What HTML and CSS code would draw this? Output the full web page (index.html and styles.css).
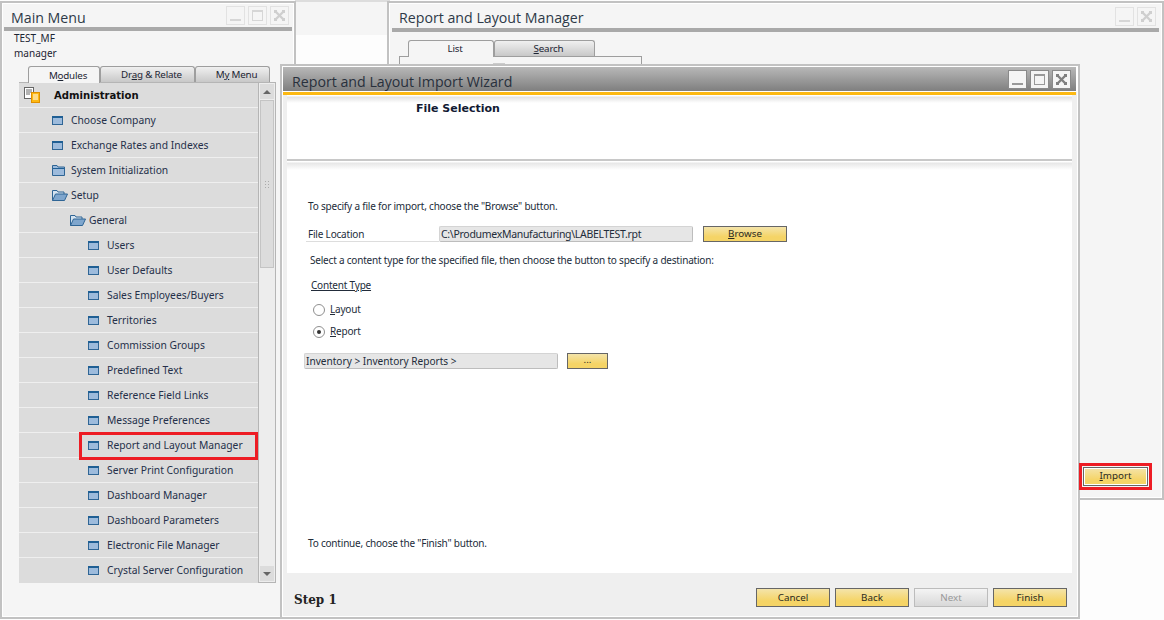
FILE: index.html
```html
<!DOCTYPE html>
<html lang="en">
<head>
<meta charset="utf-8">
<title>Report and Layout Import Wizard</title>
<link rel="stylesheet" href="styles.css">
</head>
<body>
<svg width="0" height="0" class="defs">
  <symbol id="form" viewBox="0 0 11 9"><rect x=".5" y=".5" width="10" height="8" fill="#9dbbdc" stroke="#2f6595"/><rect x="0" y="0" width="11" height="2" fill="#1f5f94"/></symbol>
  <symbol id="folder" viewBox="0 0 13 11"><path d="M.5 10.500V.5h4.500l1 1.500h6.500v8.500z" fill="#9dbbdc" stroke="#2f6595"/><rect x="1" y="3" width="11" height="1" fill="#1f5f94"/></symbol>
  <symbol id="open" viewBox="0 0 16 11"><path d="M.5 10.500V.5h4.500l1 1.500h6v2" fill="#d5e3f0" stroke="#2f6595"/><path d="M.5 10.500l3-6.500h12l-3 6.500z" fill="#7fa6cd" stroke="#2f6595"/></symbol>
  <symbol id="x" viewBox="0 0 11 11"><path d="M2 2l7 7M9 2l-7 7" stroke="currentColor" stroke-width="2.400" fill="none"/><path d="M0 0h3v2H2v1H0zM8 0h3v3H9V2H8zM0 8h2v1h1v2H0zM9 8h2v3H8V9h1z" fill="currentColor"/></symbol>
</svg>

<div class="backdrop"></div>

<section class="win main-win">
  <header class="win-title"><h1>Main Menu</h1>
    <div class="controls faint">
      <span class="ctl"><i class="min"></i></span><span class="ctl"><i class="max"></i></span><span class="ctl"><svg class="xicon"><use href="#x"/></svg></span>
    </div>
  </header>
  <div class="user">TEST_MF</div>
  <div class="user">manager</div>
  <div class="tabs menu-tabs">
    <span class="tab active mod"><span>M<u>o</u>dules</span></span>
    <span class="tab drag"><span>Dr<u>a</u>g &amp; Relate</span></span>
    <span class="tab mymenu"><span>M<u>y</u> Menu</span></span>
  </div>
  <div class="menu-panel">
    <ul class="menu-list">
      <li class="row head"><svg class="admin" width="16" height="16" viewBox="0 0 16 16"><rect x=".5" y=".5" width="9" height="11" fill="#fff" stroke="#666"/><path d="M2 3h6M2 5h6M2 7h4" stroke="#666"/><rect x="7.500" y="5.500" width="8" height="10" fill="#fdb913" stroke="#e09000"/><path d="M9 8h5M9 10h5M9 12h5" stroke="#fff"/></svg><b>Administration</b></li>
      <li class="row l1"><svg class="ic"><use href="#form"/></svg>Choose Company</li>
      <li class="row l1"><svg class="ic"><use href="#form"/></svg>Exchange Rates and Indexes</li>
      <li class="row l1"><svg class="ic fold"><use href="#folder"/></svg>System Initialization</li>
      <li class="row l1"><svg class="ic wide"><use href="#open"/></svg>Setup</li>
      <li class="row l2"><svg class="ic wide"><use href="#open"/></svg>General</li>
      <li class="row l3"><svg class="ic"><use href="#form"/></svg>Users</li>
      <li class="row l3"><svg class="ic"><use href="#form"/></svg>User Defaults</li>
      <li class="row l3"><svg class="ic"><use href="#form"/></svg>Sales Employees/Buyers</li>
      <li class="row l3"><svg class="ic"><use href="#form"/></svg>Territories</li>
      <li class="row l3"><svg class="ic"><use href="#form"/></svg>Commission Groups</li>
      <li class="row l3"><svg class="ic"><use href="#form"/></svg>Predefined Text</li>
      <li class="row l3"><svg class="ic"><use href="#form"/></svg>Reference Field Links</li>
      <li class="row l3"><svg class="ic"><use href="#form"/></svg>Message Preferences</li>
      <li class="row l3"><svg class="ic"><use href="#form"/></svg>Report and Layout Manager</li>
      <li class="row l3"><svg class="ic"><use href="#form"/></svg>Server Print Configuration</li>
      <li class="row l3"><svg class="ic"><use href="#form"/></svg>Dashboard Manager</li>
      <li class="row l3"><svg class="ic"><use href="#form"/></svg>Dashboard Parameters</li>
      <li class="row l3"><svg class="ic"><use href="#form"/></svg>Electronic File Manager</li>
      <li class="row l3"><svg class="ic"><use href="#form"/></svg>Crystal Server Configuration</li>
    </ul>
    <div class="scrollbar">
      <span class="sb-btn"><i class="arrow up"></i></span>
      <span class="sb-thumb"><i class="grip"></i></span>
      <span class="sb-track"></span>
      <span class="sb-btn"><i class="arrow down"></i></span>
    </div>
  </div>
</section>

<section class="win mgr-win">
  <header class="win-title"><h1>Report and Layout Manager</h1>
    <div class="controls faint">
      <span class="ctl"><i class="min"></i></span><span class="ctl"><svg class="xicon"><use href="#x"/></svg></span>
    </div>
  </header>
  <div class="tabs mgr-tabs">
    <span class="tab active list"><span>List</span></span>
    <span class="tab search"><span><u>S</u>earch</span></span>
  </div>
  <div class="mgr-panel"><div class="mgr-col"></div></div>
</section>

<section class="win wiz-win">
  <header class="wiz-title"><h1>Report and Layout Import Wizard</h1>
    <div class="controls">
      <span class="ctl"><i class="min"></i></span><span class="ctl"><i class="max"></i></span><span class="ctl"><svg class="xicon"><use href="#x"/></svg></span>
    </div>
  </header>
  <div class="wiz-body">
    <div class="wiz-head"><h2>File Selection</h2></div>
    <div class="wiz-form">
      <p class="t-import">To specify a file for import, choose the "Browse" button.</p>
      <div class="file-row">
        <span class="file-label">File Location</span>
        <span class="field file-field">C:\ProdumexManufacturing\LABELTEST.rpt</span>
        <span class="btn browse"><span><u>B</u>rowse</span></span>
      </div>
      <p class="t-select">Select a content type for the specified file, then choose the button to specify a destination:</p>
      <p class="t-type"><u>Content Type</u></p>
      <div class="radio-row first"><i class="radio"></i><span><u>L</u>ayout</span></div>
      <div class="radio-row"><i class="radio on"></i><span><u>R</u>eport</span></div>
      <div class="dest-row">
        <span class="field dest-field">Inventory &gt; Inventory Reports &gt;</span>
        <span class="btn dots">...</span>
      </div>
      <p class="t-finish">To continue, choose the "Finish" button.</p>
    </div>
    <footer class="wiz-foot">
      <strong>Step 1</strong>
      <div class="foot-btns">
        <span class="btn act">Cancel</span>
        <span class="btn act">Back</span>
        <span class="btn act disabled">Next</span>
        <span class="btn act">Finish</span>
      </div>
    </footer>
  </div>
</section>

<span class="btn import"><span><u>I</u>mport</span></span>
<div class="mark mark-menu"></div>
<div class="mark mark-import"></div>
</body>
</html>
```

FILE: styles.css
```css
* { box-sizing: border-box; }
html, body { margin: 0; padding: 0; }
body {
  position: relative;
  width: 1164px;
  height: 620px;
  overflow: hidden;
  background: #fdfdfd;
  font: 11px/13px "Noto Sans", "DejaVu Sans", sans-serif;
  color: #1c2433;
}
.defs { position: absolute; }
h1, h2, p, ul { margin: 0; padding: 0; font-weight: normal; }
ul { list-style: none; }
i { display: block; }

.backdrop {
  position: absolute;
  left: 295px; top: 0;
  width: 95px; height: 35px;
  background: #f5f5f5;
  border-top: 2px solid #ddd;
}

.win {
  position: absolute;
  background: #f5f5f5;
  border: 2px solid #c2c2c2;
  outline: 1px solid #fff;
  outline-offset: -3px;
}
.main-win { left: 0; top: 1px; width: 296px; height: 618px; padding: 0 2px; }
.mgr-win { left: 387px; top: 1px; width: 777px; height: 499px; padding: 0 3px; }
.wiz-win { left: 280px; top: 64px; width: 800px; height: 555px; padding: 1px 2px 1px 1px; background: #efefef; z-index: 2; }

.win-title {
  display: flex;
  justify-content: space-between;
  align-items: center;
  border-bottom: 4px solid #a9a9a9;
  box-sizing: content-box;
  padding: 1px 3px 0 7px;
  height: 23px;
}
.mgr-win .win-title { height: 24px; }
.win-title h1 { font: 14.200px/20px "Open Sans", "Noto Sans", sans-serif; color: #2e3a48; margin-top: 4px; }

.controls { display: flex; gap: 3px; }
.ctl {
  display: flex;
  align-items: center;
  justify-content: center;
  width: 19px; height: 19px;
  background: #f5f5f5;
  border: 1px solid #8a8a8a;
  color: #808080;
}
.min { width: 11px; height: 2px; background: #999; margin-top: 9px; }
.max { width: 11px; height: 11px; border: 1px solid #999; border-top-width: 2px; }
.xicon { width: 11px; height: 11px; }
.faint .ctl { border-color: #e2e2e2; color: #cfcfcf; }
.faint .min, .faint .max { background: #d6d6d6; border-color: #d6d6d6; }
.faint .max { background: none; }

.user { height: 15px; padding-left: 10px; line-height: 15px; font-size: 10px; }

.tabs { display: flex; align-items: flex-end; }
.tab {
  display: flex;
  align-items: center;
  justify-content: center;
  height: 16px;
  padding-left: 8px;
  background: linear-gradient(#f0f0f0, #c8c8c8);
  border: 1px solid #9e9e9e;
  border-bottom: 0;
  border-radius: 3px 3px 0 0;
  font-size: 9.800px;
  letter-spacing: -.2px;
}
.tab.active { height: 17px; background: #f5f5f5; position: relative; z-index: 1; margin-bottom: -1px; }
.menu-tabs { margin: 5px 0 0 24px; height: 16px; }
.mod { width: 72px; }
.drag { width: 95px; }
.mymenu { width: 75px; }

.menu-panel {
  display: flex;
  width: 257px;
  height: 501px;
  margin-left: 15px;
  border-top: 1px solid #b5b5b5;
}
.menu-list { width: 239px; }
.row {
  display: flex;
  align-items: center;
  height: 25px;
  background: #dcdcdc;
  border-bottom: 1px solid #efefef;
  font-size: 10.300px;
  color: #25304a;
}
.row:last-child { border-bottom: 0; }
.head { padding-left: 5px; color: #111; }
.head b { margin-left: 14px; font: bold 10.100px "DejaVu Sans", sans-serif; }
.ic { width: 11px; height: 9px; margin-right: 8px; flex: none; }
.ic.fold { width: 13px; height: 11px; margin-right: 6px; }
.ic.wide { width: 16px; height: 11px; margin-right: 3px; }
.l1 { padding-left: 33px; }
.l2 { padding-left: 51px; }
.l3 { padding-left: 69px; }

.scrollbar {
  display: flex;
  flex-direction: column;
  width: 18px;
  padding: 1px;
  background: #ededed;
  border: 1px solid #b5b5b5;
  border-top: 0;
}
.sb-btn { display: flex; align-items: center; justify-content: center; height: 15px; background: #dcdcdc; flex: none; }
.arrow { width: 0; height: 0; border: 4px solid transparent; }
.arrow.up { border-bottom: 4px solid #666; border-top: 0; }
.arrow.down { border-top: 4px solid #666; border-bottom: 0; }
.sb-thumb {
  display: flex;
  align-items: center;
  justify-content: center;
  height: 168px;
  margin-top: 1px;
  background: #dcdcdc;
  border: 1px solid #c4c4c4;
}
.grip {
  width: 6px; height: 8px;
  background-image: radial-gradient(#aaa 1px, transparent 1px);
  background-size: 3px 3px;
}
.sb-track { flex: 1; }

.mgr-tabs { margin: 6px 0 0 16px; height: 18px; }
.list { width: 86px; height: 19px; padding-bottom: 1px; background: #f5f5f5; }
.search { width: 101px; height: 16px; }
.mgr-panel { width: 243px; height: 120px; margin-left: 7px; border: 1px solid #9e9e9e; border-bottom: 0; }
.mgr-col { width: 12px; height: 2px; margin: 6px 0 0 93px; background: #ccc; }

.wiz-title {
  display: flex;
  justify-content: space-between;
  align-items: center;
  height: 24px;
  padding: 0 5px 0 9px;
  background: linear-gradient(#b8b8b8, #7f7f7f);
  outline: 1px solid #fff;
}
.wiz-title h1 { font: 14.200px/20px "Open Sans", "Noto Sans", sans-serif; color: #28303c; margin-top: 6px; }
.wiz-body {
  display: flex;
  flex-direction: column;
  height: 525px;
  border-top: 4px solid #fdb913;
  padding: 0 4px;
}
.wiz-head {
  height: 66px;
  background: linear-gradient(#fff 1px, #e2e2e2 2px, #fff 8px) no-repeat #fff;
  border-bottom: 2px solid #c8c8c8;
  padding-top: 6px;
}
.wiz-head h2 { margin-left: 129px; font: bold 11px/15px "DejaVu Sans", sans-serif; color: #111a33; }
.wiz-form {
  flex: 1;
  background: linear-gradient(#fff 1px, #e6e6e6 2px, #fff 9px) no-repeat #fff;
  padding: 39px 0 0 21px;
  font-size: 10px;
  letter-spacing: -.2px;
  color: #222c3a;
}
.t-import { height: 13px; }
.file-row { display: flex; align-items: center; height: 17px; margin-top: 12px; margin-left: -2px; }
.file-label { width: 133px; height: 16px; padding-left: 2px; line-height: 16px; border-bottom: 1px solid #ddd; }
.field {
  display: block;
  height: 16px;
  line-height: 15px;
  background: #e6e6e6;
  border: 1px solid #bdbdbd;
  border-top-color: #d4d4d4;
  border-left-color: #d4d4d4;
  border-radius: 2px;
  padding-left: 1px;
  white-space: nowrap;
}
.file-field { width: 254px; font-size: 10.500px; letter-spacing: -.3px; }
.btn {
  display: flex;
  align-items: center;
  justify-content: center;
  background: linear-gradient(#f4e4aa, #f5d466 70%);
  border: 1px solid #666;
  font-size: 9.800px;
  letter-spacing: 0;
  color: #2a2a22;
}
.browse { width: 84px; height: 16px; margin-left: 10px; }
.t-select { height: 13px; margin: 12px 0 0 2px; }
.t-type { height: 13px; margin: 12px 0 0 3px; }
.radio-row { display: flex; align-items: center; height: 13px; gap: 5px; margin: 9px 0 0 5px; }
.radio-row.first { margin-top: 11px; }
.radio { width: 12px; height: 12px; border: 1px solid #8f8f8f; border-radius: 50%; background: #fff; position: relative; }
.radio.on::after { content: ""; position: absolute; left: 3px; top: 3px; width: 4px; height: 4px; border-radius: 50%; background: #333; }
.dest-row { display: flex; align-items: center; margin: 15px 0 0 -4px; }
.dest-field { width: 254px; font-size: 10.100px; letter-spacing: 0; }
.dots { width: 41px; height: 16px; margin-left: 9px; padding-bottom: 3px; }
.t-finish { margin-top: 168px; }
.wiz-foot {
  display: flex;
  justify-content: space-between;
  align-items: center;
  height: 43px;
  padding: 0 5px 0 7px;
  background: #efefef;
}
.wiz-foot strong { font: bold 12px/16px "DejaVu Serif", serif; color: #222; margin-top: 10px; }
.foot-btns { display: flex; gap: 5px; margin-top: 5px; }
.act { width: 74px; height: 19px; }
.disabled { background: linear-gradient(#f4f4f4, #d8d8d8); border-color: #bcbcbc; color: #999; }

.import {
  position: absolute;
  left: 1083px; top: 467px;
  width: 65px; height: 19px;
  padding-bottom: 2px;
  z-index: 3;
  box-shadow: inset 0 0 0 1px #fff;
}
.mark { position: absolute; border: 3px solid #ed1c24; z-index: 4; }
.mark-menu { left: 79px; top: 432px; width: 179px; height: 28px; }
.mark-import { left: 1079px; top: 463px; width: 73px; height: 27px; }
```
